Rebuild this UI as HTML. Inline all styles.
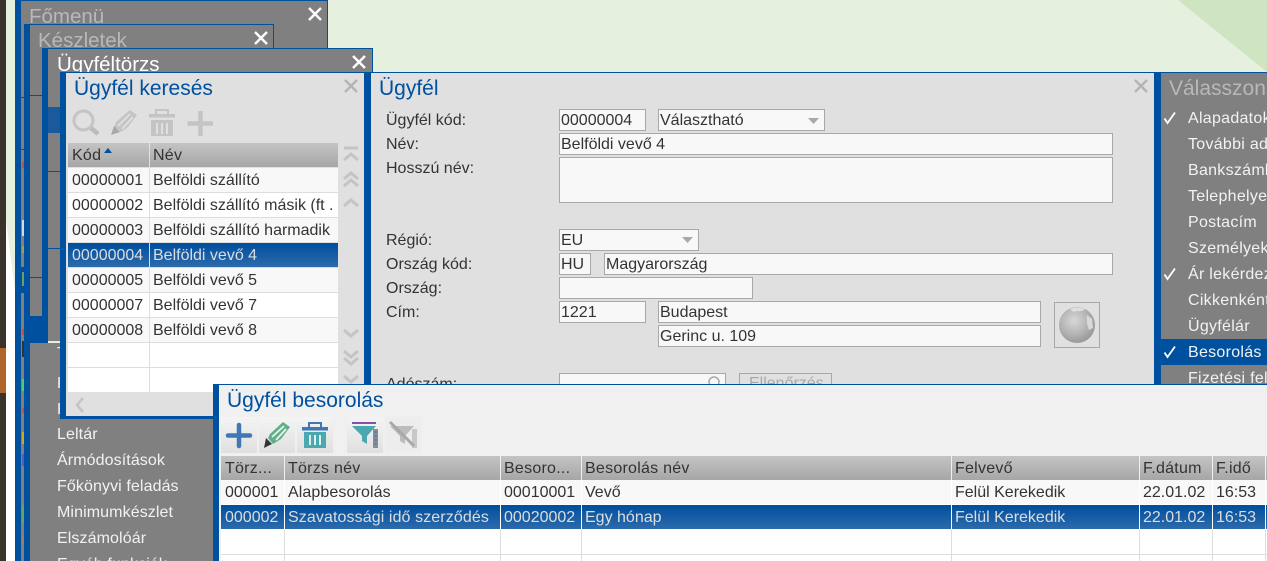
<!DOCTYPE html>
<html><head><meta charset="utf-8"><style>
*{box-sizing:border-box;margin:0;padding:0}
html,body{width:1267px;height:561px;overflow:hidden}
body{position:relative;background:#e5f0df;font:16px/20px "Liberation Sans",sans-serif;color:#333}
.a{position:absolute;white-space:nowrap}
.g{position:absolute;background:#808080}
.b{position:absolute;background:#0050a0}
.t{position:absolute;font-size:21px;line-height:26px;white-space:nowrap;margin-top:1px}
.n{font-size:20.5px}
.m{position:absolute;color:#f2f2f2;white-space:nowrap;line-height:22px;letter-spacing:.1px;margin-top:1px}
.w{letter-spacing:.28px}
.l{position:absolute;white-space:nowrap;color:#333;line-height:22px;margin-top:1px}
.i{position:absolute;background:#f8f8f8;border:1px solid #a8a8a8;height:22px;padding-left:1px;line-height:22px;white-space:nowrap;overflow:hidden;color:#333}
.c{position:absolute;white-space:nowrap;overflow:hidden;height:24px;line-height:26px;padding-left:4px;color:#333}
.p{padding-left:3px}
.h{background:linear-gradient(#c4c4c4,#a6a6a6);letter-spacing:.25px}
.s{background:linear-gradient(#004e9e,#2d6bab);color:#ddd}
.ic{position:absolute}
</style></head><body>
<svg class="ic" style="left:0;top:0" width="1267" height="561"><polygon points="1178,0 1267,0 1267,72" fill="#cfe4c1"/><polygon points="6,220 6,561 15,561 15,290" fill="#fff"/></svg>
<div class="a" style="left:0;top:0;width:6px;height:561px;background:#3a332c"></div>
<div class="a" style="left:0;top:348px;width:6px;height:45px;background:#b0662b"></div>

<!-- Főmenü -->
<div class="b" style="left:15px;top:0;width:6px;height:561px"></div>
<div class="g" style="left:21px;top:1px;width:306px;height:72px"></div>
<div class="b" style="left:327px;top:0;width:1px;height:48px"></div>
<div class="b" style="left:21px;top:0;width:307px;height:1px"></div>
<div class="g" style="left:21px;top:70px;width:3px;height:491px"></div>
<div class="b" style="left:21px;top:97px;width:3px;height:1px"></div>
<div class="b" style="left:21px;top:149px;width:3px;height:1px"></div>
<div class="b" style="left:21px;top:267px;width:3px;height:26px"></div>
<div class="a" style="left:22px;top:162px;width:2px;height:6px;background:#c85030"></div>
<div class="a" style="left:22px;top:220px;width:2px;height:16px;background:#d8d8d8"></div>
<div class="a" style="left:22px;top:246px;width:2px;height:7px;background:#a8a040"></div>
<div class="a" style="left:22px;top:272px;width:2px;height:14px;background:#70a060"></div>
<div class="a" style="left:22px;top:329px;width:2px;height:6px;background:#c85030"></div>
<div class="a" style="left:22px;top:341px;width:2px;height:16px;background:#333"></div>
<div class="a" style="left:22px;top:379px;width:2px;height:12px;background:#50d060"></div>
<div class="a" style="left:22px;top:408px;width:2px;height:5px;background:#c85030"></div>
<div class="a" style="left:22px;top:432px;width:2px;height:12px;background:#e0a020"></div>
<div class="a" style="left:22px;top:454px;width:2px;height:12px;background:#5060c0"></div>
<div class="a" style="left:22px;top:505px;width:2px;height:18px;background:#70a060"></div>
<div class="a" style="left:22px;top:535px;width:2px;height:10px;background:#a08050"></div>
<div class="t n" style="left:29px;top:3px;color:#b8b8b8">Főmenü</div>
<svg class="ic" style="left:307px;top:6px" width="16" height="16"><path d="M2 2L14 14M14 2L2 14" stroke="#fff" stroke-width="2.4"/></svg>

<!-- Készletek -->
<div class="b" style="left:24px;top:24px;width:6px;height:537px"></div>
<div class="b" style="left:24px;top:24px;width:250px;height:1px"></div>
<div class="g" style="left:30px;top:25px;width:243px;height:24px"></div>
<div class="b" style="left:273px;top:24px;width:1px;height:24px"></div>
<div class="g" style="left:30px;top:48px;width:12px;height:268px"></div>
<div class="b" style="left:30px;top:95px;width:12px;height:1px"></div>
<div class="b" style="left:30px;top:277px;width:12px;height:1px"></div>
<div class="b" style="left:30px;top:316px;width:18px;height:27px"></div>
<div class="t n" style="left:38px;top:27px;color:#b8b8b8">Készletek</div>
<svg class="ic" style="left:253px;top:30px" width="16" height="16"><path d="M2 2L14 14M14 2L2 14" stroke="#fff" stroke-width="2.4"/></svg>

<!-- lower menu -->
<div class="g" style="left:30px;top:343px;width:190px;height:218px"></div>
<div class="m" style="left:57px;top:342px">T</div>
<div class="m" style="left:57px;top:372px">K</div>
<div class="m" style="left:57px;top:398px">K</div>
<div class="m" style="left:57px;top:423px">Leltár</div>
<div class="m" style="left:57px;top:449px">Ármódosítások</div>
<div class="m" style="left:57px;top:475px">Főkönyvi feladás</div>
<div class="m" style="left:57px;top:501px">Minimumkészlet</div>
<div class="m" style="left:57px;top:527px">Elszámolóár</div>
<div class="m" style="left:57px;top:553px">Egyéb funkciók</div>

<!-- Ügyféltörzs -->
<div class="b" style="left:42px;top:48px;width:6px;height:295px"></div>
<div class="b" style="left:42px;top:48px;width:331px;height:1px"></div>
<div class="g" style="left:48px;top:49px;width:324px;height:23px"></div>
<div class="b" style="left:372px;top:48px;width:1px;height:24px"></div>
<div class="g" style="left:48px;top:72px;width:12px;height:269px"></div>
<div class="a" style="left:48px;top:107px;width:12px;height:26px;background:#1a5a9c"></div>
<div class="b" style="left:48px;top:171px;width:12px;height:1px"></div>
<div class="b" style="left:48px;top:248px;width:12px;height:1px"></div>
<div class="t n" style="left:57px;top:51px;color:#fff">Ügyféltörzs</div>
<svg class="ic" style="left:351px;top:54px" width="16" height="16"><path d="M2 2L14 14M14 2L2 14" stroke="#fff" stroke-width="2.4"/></svg>

<!-- Ügyfél (main) -->
<div class="a" style="left:371px;top:72px;width:783px;height:312px;background:#e0e0e0"></div>
<div class="b" style="left:60px;top:72px;width:1207px;height:1px"></div>
<div class="t" style="left:379px;top:75px;color:#0050a0">Ügyfél</div>
<svg class="ic" style="left:1133px;top:78px" width="16" height="16"><path d="M2 2L14 14M14 2L2 14" stroke="#b4b4b4" stroke-width="2.4"/></svg>
<div class="l" style="left:386px;top:109px">Ügyfél kód:</div>
<div class="i" style="left:559px;top:109px;width:87px">00000004</div>
<div class="i" style="left:658px;top:109px;width:167px">Választható</div>
<svg class="ic" style="left:807px;top:117px" width="13" height="8"><path d="M1 1H12L6.500 7Z" fill="#a8a8a8"/></svg>
<div class="l" style="left:386px;top:133px">Név:</div>
<div class="i" style="left:559px;top:133px;width:554px">Belföldi vevő 4</div>
<div class="l" style="left:386px;top:157px">Hosszú név:</div>
<div class="i" style="left:559px;top:157px;width:554px;height:46px"></div>
<div class="l" style="left:386px;top:229px">Régió:</div>
<div class="i" style="left:559px;top:229px;width:140px">EU</div>
<svg class="ic" style="left:681px;top:236px" width="13" height="8"><path d="M1 1H12L6.500 7Z" fill="#a8a8a8"/></svg>
<div class="l" style="left:386px;top:253px">Ország kód:</div>
<div class="i" style="left:559px;top:253px;width:32px">HU</div>
<div class="i" style="left:604px;top:253px;width:509px">Magyarország</div>
<div class="l" style="left:386px;top:277px">Ország:</div>
<div class="i" style="left:559px;top:277px;width:194px"></div>
<div class="l" style="left:386px;top:301px">Cím:</div>
<div class="i" style="left:559px;top:301px;width:87px">1221</div>
<div class="i" style="left:658px;top:301px;width:383px">Budapest</div>
<div class="i" style="left:658px;top:325px;width:383px">Gerinc u. 109</div>
<div class="a" style="left:1054px;top:302px;width:46px;height:46px;border:1px solid #a8a8a8;background:#e0e0e0"></div>
<svg class="ic" style="left:1057px;top:305px" width="40" height="40"><defs><radialGradient id="gl" cx=".42" cy=".38" r=".7"><stop offset="0" stop-color="#d8d8d8"/><stop offset=".6" stop-color="#b0b0b0"/><stop offset="1" stop-color="#909090"/></radialGradient></defs><circle cx="20" cy="20" r="18" fill="url(#gl)"/><path d="M13 4Q20 1 28 4Q25 7 20 6Q16 8 13 4Z" fill="#dedede"/><path d="M30 10L35 14L36 23L32 25Q29 18 30 10Z" fill="#d8d8d8"/></svg>
<div class="l" style="left:386px;top:373px">Adószám:</div>
<div class="i" style="left:559px;top:373px;width:167px"></div>
<svg class="ic" style="left:706px;top:375px" width="16" height="12"><circle cx="8" cy="7" r="5" fill="none" stroke="#a8a8a8" stroke-width="1.500"/></svg>
<div class="a" style="left:739px;top:373px;width:93px;height:14px;border:1px solid #a8a8a8;color:#a8a8a8;line-height:20px;padding-left:9px;overflow:hidden">Ellenőrzés</div>

<!-- Válasszon -->
<div class="b" style="left:1154px;top:72px;width:7px;height:312px"></div>
<div class="g" style="left:1161px;top:73px;width:106px;height:311px"></div>
<div class="t" style="left:1169px;top:75px;color:#b8b8b8">Válasszon</div>
<div class="b" style="left:1161px;top:339px;width:106px;height:26px"></div>
<div class="m w" style="left:1188px;top:107px">Alapadatok</div>
<div class="m w" style="left:1188px;top:133px">További adatok</div>
<div class="m w" style="left:1188px;top:159px">Bankszámlák</div>
<div class="m w" style="left:1188px;top:185px">Telephelyek</div>
<div class="m w" style="left:1188px;top:211px">Postacím</div>
<div class="m w" style="left:1188px;top:237px">Személyek</div>
<div class="m w" style="left:1188px;top:263px">Ár lekérdezés</div>
<div class="m w" style="left:1188px;top:289px">Cikkenkénti</div>
<div class="m w" style="left:1188px;top:315px">Ügyfélár</div>
<div class="m w" style="left:1188px;top:341px">Besorolás</div>
<div class="m w" style="left:1188px;top:367px;height:16px;overflow:hidden">Fizetési feltételek</div>
<svg class="ic" style="left:1163px;top:111px" width="14" height="14"><path d="M1.500 7.500L4.500 12L12 1.500" fill="none" stroke="#fff" stroke-width="1.800"/></svg>
<svg class="ic" style="left:1163px;top:267px" width="14" height="14"><path d="M1.500 7.500L4.500 12L12 1.500" fill="none" stroke="#fff" stroke-width="1.800"/></svg>
<svg class="ic" style="left:1163px;top:345px" width="14" height="14"><path d="M1.500 7.500L4.500 12L12 1.500" fill="none" stroke="#fff" stroke-width="1.800"/></svg>

<!-- Ügyfél keresés -->
<div class="b" style="left:60px;top:72px;width:6px;height:347px"></div>
<div class="a" style="left:66px;top:73px;width:298px;height:343px;background:#e0e0e0"></div>
<div class="b" style="left:364px;top:72px;width:7px;height:347px"></div>
<div class="b" style="left:60px;top:416px;width:311px;height:3px"></div>
<div class="t" style="left:74px;top:75px;color:#0050a0">Ügyfél keresés</div>
<svg class="ic" style="left:343px;top:78px" width="16" height="16"><path d="M2 2L14 14M14 2L2 14" stroke="#b4b4b4" stroke-width="2.4"/></svg>
<svg class="ic" style="left:70px;top:106px" width="150" height="32" fill="none" stroke="#c4c4c4">
<circle cx="13.500" cy="14.500" r="9.500" stroke-width="3"/><path d="M21 22L28 28" stroke-width="4.500" stroke="#bcbcbc"/>
<path d="M44 21L46 16L60 4L67 9L58 21L51 26Z" fill="#c4c4c4" stroke="none"/><path d="M48 20L60 8M52 23L63 11" stroke="#e0e0e0" stroke-width="1.800"/><path d="M41 29L44 20L50 26Z" fill="#a8a8a8" stroke="none"/>
<rect x="79" y="8" width="26" height="3.500" fill="#c4c4c4" stroke="none"/><rect x="86" y="4" width="12" height="5" stroke-width="2"/><path d="M81 14H103V30H81Z" fill="#c4c4c4" stroke="none"/><path d="M87 17V28M92 17V28M97 17V28" stroke="#e0e0e0" stroke-width="2"/>
<path d="M117.500 17.500H143M130.500 5V30" stroke-width="4.500"/></svg>
<div class="a" style="left:68px;top:168px;width:270px;height:224px;background:#fff"></div>
<div class="c h" style="left:68px;top:143px;width:81px">Kód</div>
<div class="c h p" style="left:150px;top:143px;width:188px">Név</div>
<svg class="ic" style="left:103px;top:147px" width="10" height="7"><path d="M1 6L5 1L9 6Z" fill="#0050a0"/></svg>
<div class="c" style="left:68px;top:168px;width:81px;background:#f8f8f8">00000001</div><div class="c p" style="left:150px;top:168px;width:188px;background:#f8f8f8">Belföldi szállító</div>
<div class="c" style="left:68px;top:193px;width:81px">00000002</div><div class="c p" style="left:150px;top:193px;width:188px">Belföldi szállító másik (ft .</div>
<div class="c" style="left:68px;top:218px;width:81px;background:#f8f8f8">00000003</div><div class="c p" style="left:150px;top:218px;width:188px;background:#f8f8f8">Belföldi szállító harmadik</div>
<div class="c s" style="left:68px;top:243px;width:81px;color:#ddd">00000004</div><div class="c s p" style="left:150px;top:243px;width:188px;color:#ddd">Belföldi vevő 4</div>
<div class="c" style="left:68px;top:268px;width:81px;background:#f8f8f8">00000005</div><div class="c p" style="left:150px;top:268px;width:188px;background:#f8f8f8">Belföldi vevő 5</div>
<div class="c" style="left:68px;top:293px;width:81px">00000007</div><div class="c p" style="left:150px;top:293px;width:188px">Belföldi vevő 7</div>
<div class="c" style="left:68px;top:318px;width:81px;background:#f8f8f8">00000008</div><div class="c p" style="left:150px;top:318px;width:188px;background:#f8f8f8">Belföldi vevő 8</div>
<svg class="ic" style="left:68px;top:168px" width="270" height="224"><g fill="#ddd"><rect y="24" width="270" height="1"/><rect y="49" width="270" height="1"/><rect y="74" width="270" height="1"/><rect y="99" width="270" height="1"/><rect y="124" width="270" height="1"/><rect y="149" width="270" height="1"/><rect y="174" width="270" height="1"/><rect y="199" width="270" height="1"/><rect x="81" width="1" height="224"/></g></svg>
<svg class="ic" style="left:342px;top:145px" width="20" height="245" fill="none" stroke="#c4c4c4" stroke-width="3">
<path d="M2 3H16"/><path d="M2 15L9 9L16 15"/><path d="M2 34L9 28L16 34M2 41L9 35L16 41"/><path d="M2 61L9 55L16 61"/>
<path d="M2 185L9 191L16 185"/><path d="M2 206L9 212L16 206M2 213L9 219L16 213"/><path d="M2 231L9 237L16 231"/></svg>
<svg class="ic" style="left:74px;top:396px" width="12" height="18"><path d="M9 2L3 9L9 16" fill="none" stroke="#c4c4c4" stroke-width="2.500"/></svg>

<!-- Ügyfél besorolás -->
<div class="b" style="left:213px;top:384px;width:1054px;height:1px"></div>
<div class="b" style="left:213px;top:384px;width:6px;height:177px"></div>
<div class="a" style="left:219px;top:385px;width:1048px;height:176px;background:#f0f0f0"></div>
<div class="t" style="left:227px;top:387px;color:#0050a0">Ügyfél besorolás</div>
<div class="a" style="left:221px;top:417px;width:36px;height:36px;background:linear-gradient(#f4f4f4,#e0e0e0)"></div>
<div class="a" style="left:259px;top:417px;width:36px;height:36px;background:linear-gradient(#f4f4f4,#e0e0e0)"></div>
<div class="a" style="left:297px;top:417px;width:36px;height:36px;background:linear-gradient(#f4f4f4,#e0e0e0)"></div>
<div class="a" style="left:347px;top:417px;width:36px;height:36px;background:linear-gradient(#f4f4f4,#e0e0e0)"></div>
<div class="a" style="left:385px;top:417px;width:36px;height:36px;background:#ededed"></div>
<svg class="ic" style="left:221px;top:417px" width="200" height="36" fill="none">
<path d="M7 18.500H29M18 8V29" stroke="#3f78b4" stroke-width="4.500" stroke-linecap="round"/>
<path d="M47 21L49 17L62 5L69 10L60 22L52 27Z" fill="#5fb088"/><path d="M51 20L63 9M55 23L65 12" stroke="#e8f4ee" stroke-width="1.800"/><path d="M43 31L45 21L51 27Z" fill="#333"/>
<rect x="81" y="10" width="26" height="3.500" fill="#3f78b4"/><rect x="88" y="6" width="12" height="5" stroke="#3f78b4" stroke-width="2"/><path d="M83 15H105V31H83Z" fill="#4aa8b0"/><path d="M89 18V28M94 18V28M99 18V28" stroke="#e0f0f0" stroke-width="2"/>
<rect x="131" y="5" width="24" height="2" fill="#8a4fa8"/><path d="M131 9H155L146 19V27L141 24V19Z" fill="#4aa8b0"/><rect x="152" y="12" width="5" height="19" fill="#8c8c8c"/><path d="M153 15H156M153 19H156M153 23H156M153 27H156" stroke="#3f78b4"/>
<path d="M169 9H193L184 19V27L179 24V19Z" fill="#bcbcbc"/><rect x="191" y="12" width="5" height="19" fill="#c8c8c8"/><path d="M169 5L193 29" stroke="#a8a8a8" stroke-width="3"/></svg>
<div class="a" style="left:221px;top:480px;width:1046px;height:81px;background:#fff"></div>
<div class="c h" style="left:221px;top:456px;width:63px">Törz...</div>
<div class="c h p" style="left:285px;top:456px;width:215px">Törzs név</div>
<div class="c h p" style="left:501px;top:456px;width:80px">Besoro...</div>
<div class="c h p" style="left:582px;top:456px;width:369px">Besorolás név</div>
<div class="c h p" style="left:952px;top:456px;width:187px">Felvevő</div>
<div class="c h p" style="left:1140px;top:456px;width:72px">F.dátum</div>
<div class="c h p" style="left:1213px;top:456px;width:52px">F.idő</div>
<div class="c h" style="left:1266px;top:456px;width:1px"></div>
<div class="c" style="left:221px;top:480px;width:63px;background:#f8f8f8">000001</div>
<div class="c p" style="left:285px;top:480px;width:215px;background:#f8f8f8;letter-spacing:.1px">Alapbesorolás</div>
<div class="c p" style="left:501px;top:480px;width:80px;background:#f8f8f8">00010001</div>
<div class="c p" style="left:582px;top:480px;width:369px;background:#f8f8f8">Vevő</div>
<div class="c p" style="left:952px;top:480px;width:187px;background:#f8f8f8">Felül Kerekedik</div>
<div class="c p" style="left:1140px;top:480px;width:72px;background:#f8f8f8">22.01.02</div>
<div class="c p" style="left:1213px;top:480px;width:52px;background:#f8f8f8">16:53</div>
<div class="c" style="left:1266px;top:480px;width:1px;background:#f8f8f8"></div>
<div class="c s" style="left:221px;top:505px;width:63px;color:#ddd">000002</div>
<div class="c s p" style="left:285px;top:505px;width:215px;color:#ddd;letter-spacing:.1px">Szavatossági idő szerződés</div>
<div class="c s p" style="left:501px;top:505px;width:80px;color:#ddd">00020002</div>
<div class="c s p" style="left:582px;top:505px;width:369px;color:#ddd">Egy hónap</div>
<div class="c s p" style="left:952px;top:505px;width:187px;color:#ddd">Felül Kerekedik</div>
<div class="c s p" style="left:1140px;top:505px;width:72px;color:#ddd">22.01.02</div>
<div class="c s p" style="left:1213px;top:505px;width:52px;color:#ddd">16:53</div>
<div class="c s" style="left:1266px;top:505px;width:1px"></div>
<svg class="ic" style="left:221px;top:530px" width="1046" height="31"><g fill="#ddd"><rect y="24" width="1046" height="1"/><rect x="63" width="1" height="31"/><rect x="279" width="1" height="31"/><rect x="360" width="1" height="31"/><rect x="730" width="1" height="31"/><rect x="918" width="1" height="31"/><rect x="991" width="1" height="31"/><rect x="1044" width="1" height="31"/></g></svg>
</body></html>
